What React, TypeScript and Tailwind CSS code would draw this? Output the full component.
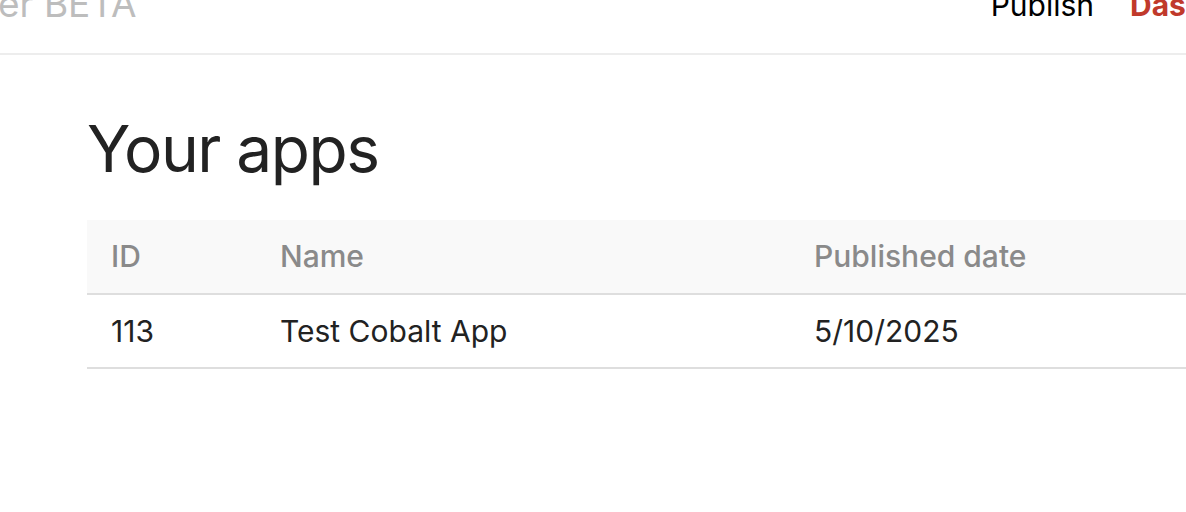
export default function App() {
  const apps = [{ id: 113, name: "Test Cobalt App", published: "5/10/2025" }]

  return (
    <div className="min-h-screen w-[1186px] overflow-hidden bg-white font-['Inter',sans-serif]">
      <header className="h-[55px] border-b-2 border-[#ededed] flex items-end justify-between overflow-hidden">
        <div className="text-[37px] leading-none text-[#bdbdbd] -ml-[2px] mb-[31px] whitespace-nowrap">er BETA</div>
        <nav className="flex items-end gap-[36px] mb-[33px] -mr-[104px] whitespace-nowrap">
          <span className="text-[30px] leading-none text-black">Publish</span>
          <span className="text-[30px] leading-none font-bold text-[#c0392b]">Dashboard</span>
        </nav>
      </header>

      <main className="pl-[87px] pt-[54px]">
        <h1 className="text-[64px] leading-[80px] tracking-[-1.5px] text-[#222] mb-[31px]">Your apps</h1>
        <table className="w-[1200px] border-collapse text-left">
          <thead>
            <tr className="bg-[#f9f9f9] border-b-2 border-[#dedede] h-[74px]">
              <th className="w-[169px] pl-[24px] text-[30px] font-medium text-[#8a8a8a]">ID</th>
              <th className="w-[534px] pl-[24px] text-[30px] font-medium text-[#8a8a8a]">Name</th>
              <th className="pl-[24px] text-[30px] font-medium text-[#8a8a8a]">Published date</th>
            </tr>
          </thead>
          <tbody>
            {apps.map(app => (
              <tr key={app.id} className="border-b-2 border-[#dedede] h-[74px]">
                <td className="pl-[24px] text-[30px] text-[#222]">{app.id}</td>
                <td className="pl-[24px] text-[30px] text-[#222]">{app.name}</td>
                <td className="pl-[24px] text-[30px] text-[#222]">{app.published}</td>
              </tr>
            ))}
          </tbody>
        </table>
      </main>
    </div>
  )
}
